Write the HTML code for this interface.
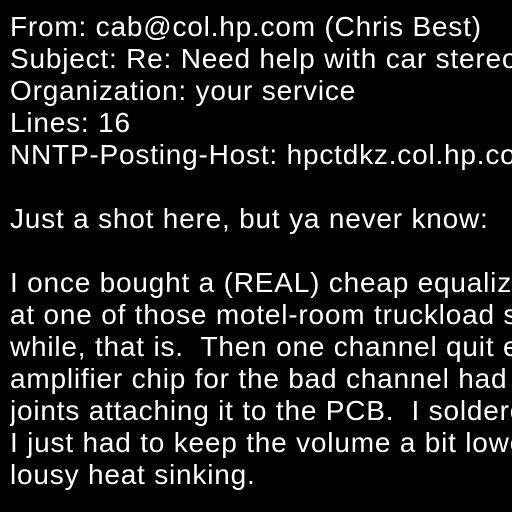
<!DOCTYPE html>
<html><head><style>
html,body{margin:0;padding:0;background:#000;width:512px;height:512px;overflow:hidden}
pre{margin:0;position:absolute;left:10px;top:11px;width:502px;height:500px;overflow:hidden;color:#fff;font-family:"Liberation Sans",Arial,sans-serif;font-size:28px;line-height:32px;letter-spacing:0.8px;white-space:pre}
</style></head><body>
<pre>From: cab@col.hp.com (Chris Best)
Subject: Re: Need help with car stereo
Organization: your service
Lines: 16
NNTP-Posting-Host: hpctdkz.col.hp.com

Just a shot here, but ya never know:

I once bought a (REAL) cheap equalizer
at one of those motel-room truckload sales
while, that is.  Then one channel quit e
amplifier chip for the bad channel had
joints attaching it to the PCB.  I soldered
I just had to keep the volume a bit lower
lousy heat sinking.</pre>
</body></html>
